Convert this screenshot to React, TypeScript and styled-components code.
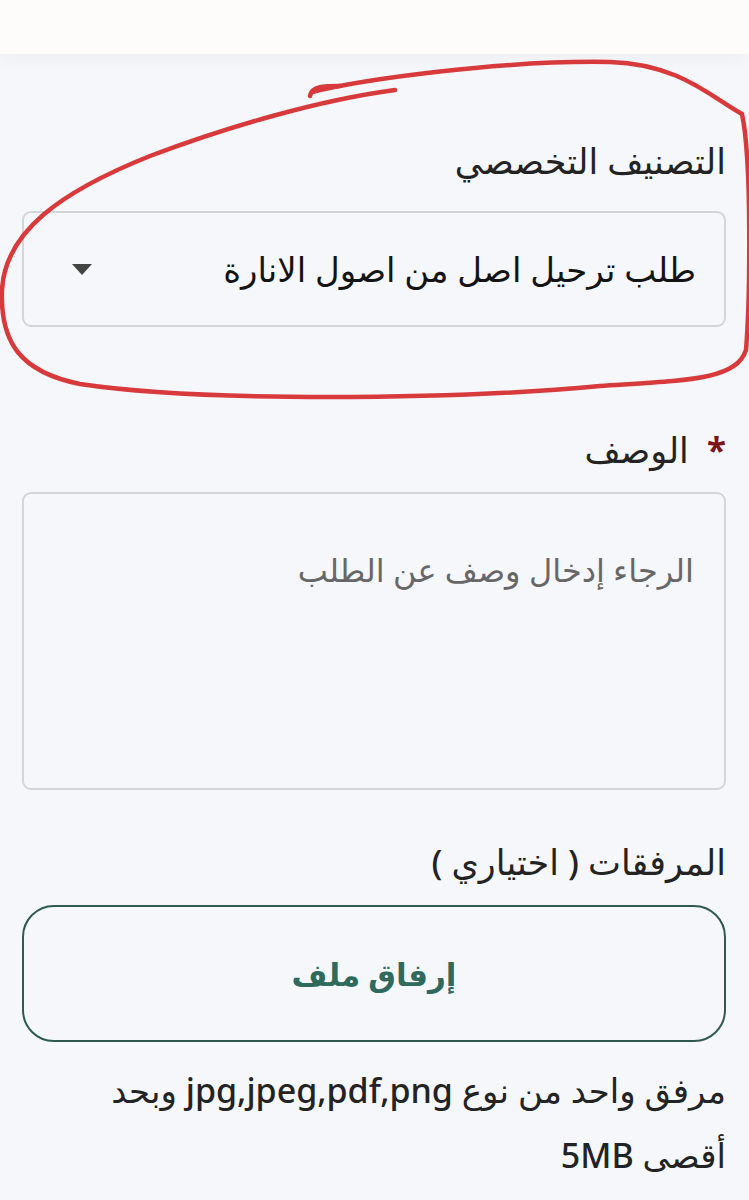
import styled, { createGlobalStyle } from "styled-components";

const GlobalStyle = createGlobalStyle`
  html, body {
    margin: 0;
    padding: 0;
    background: #f6f7fb;
  }
  * {
    box-sizing: border-box;
  }
`;

export default function App() {
  return (
    <Page>
      <GlobalStyle />
      <TopBar />
      <Form>
        <Label first>التصنيف التخصصي</Label>
        <Select>
          <SelectText>طلب ترحيل اصل من اصول الانارة</SelectText>
          <Caret />
        </Select>

        <Label gap={100}>
          <Required>*</Required>&nbsp; الوصف
        </Label>
        <TextArea placeholder="الرجاء إدخال وصف عن الطلب" />

        <Label gap={49}>المرفقات ( اختياري )</Label>
        <AttachButton>إرفاق ملف</AttachButton>
        <Hint>
          مرفق واحد من نوع jpg,jpeg,pdf,png وبحد
          <br />
          أقصى 5MB
        </Hint>
      </Form>

      {/* hand drawn marker around the first field */}
      <Annotation viewBox="0 0 749 420" width={749} height={420}>
        <path d="M 312 92 C 360 80, 500 60, 610 62 C 680 64, 712 98, 742 114 C 752 160, 750 300, 746 350 C 736 380, 690 380, 600 386 C 450 400, 200 402, 80 384 C 20 372, 0 342, 2 290 C 5 232, 60 192, 150 156 C 230 126, 320 100, 395 90" />
        <path d="M 310 96 C 312 86, 324 86, 340 86" />
      </Annotation>
    </Page>
  );
}

const Page = styled.div`
  position: relative;
  min-height: 1200px;
  font-family: "Noto Sans", "DejaVu Sans", sans-serif;
  color: #222;
`;

const TopBar = styled.div`
  height: 54px;
  background: #fdfcfa;
  box-shadow: 0 6px 18px rgba(0, 0, 0, 0.035);
`;

const Form = styled.div`
  direction: rtl;
  display: flex;
  flex-direction: column;
  padding: 0 23px 0 22px;
`;

const Label = styled.div<{ first?: boolean; gap?: number }>`
  margin-top: ${(p) => (p.first ? 84 : p.gap ?? 0)}px;
  font-size: 35px;
  line-height: 46px;
  font-weight: 500;
  color: #232323;
`;

const Required = styled.span`
  color: #7a1518;
  font-weight: 700;
`;

const Select = styled.div`
  margin-top: 27px;
  height: 116px;
  border: 2px solid #d4d5d9;
  border-radius: 9px;
  display: flex;
  align-items: center;
  justify-content: space-between;
  padding: 0 28px 0 48px;
`;

const SelectText = styled.span`
  font-size: 34px;
  color: #141414;
`;

const Caret = styled.span`
  width: 0;
  height: 0;
  border-left: 10px solid transparent;
  border-right: 10px solid transparent;
  border-top: 11px solid #444;
`;

const TextArea = styled.textarea`
  margin-top: 19px;
  height: 298px;
  border: 2px solid #d4d5d9;
  border-radius: 9px;
  background: transparent;
  padding: 54px 30px 0;
  font-family: inherit;
  font-size: 32px;
  resize: none;
  direction: rtl;
  &::placeholder {
    color: #676767;
  }
`;

const AttachButton = styled.button`
  margin-top: 20px;
  height: 137px;
  border: 2px solid #2f5a50;
  border-radius: 32px;
  background: transparent;
  font-family: inherit;
  font-size: 31px;
  font-weight: 600;
  color: #2f6a5c;
`;

const Hint = styled.p`
  margin: 16px 0 0;
  font-size: 34px;
  line-height: 65px;
  font-weight: 500;
  color: #232323;
`;

const Annotation = styled.svg`
  position: absolute;
  top: 0;
  left: 0;
  pointer-events: none;
  fill: none;
  stroke: #d83a3c;
  stroke-width: 4.5;
  stroke-linecap: round;
  stroke-linejoin: round;
`;
